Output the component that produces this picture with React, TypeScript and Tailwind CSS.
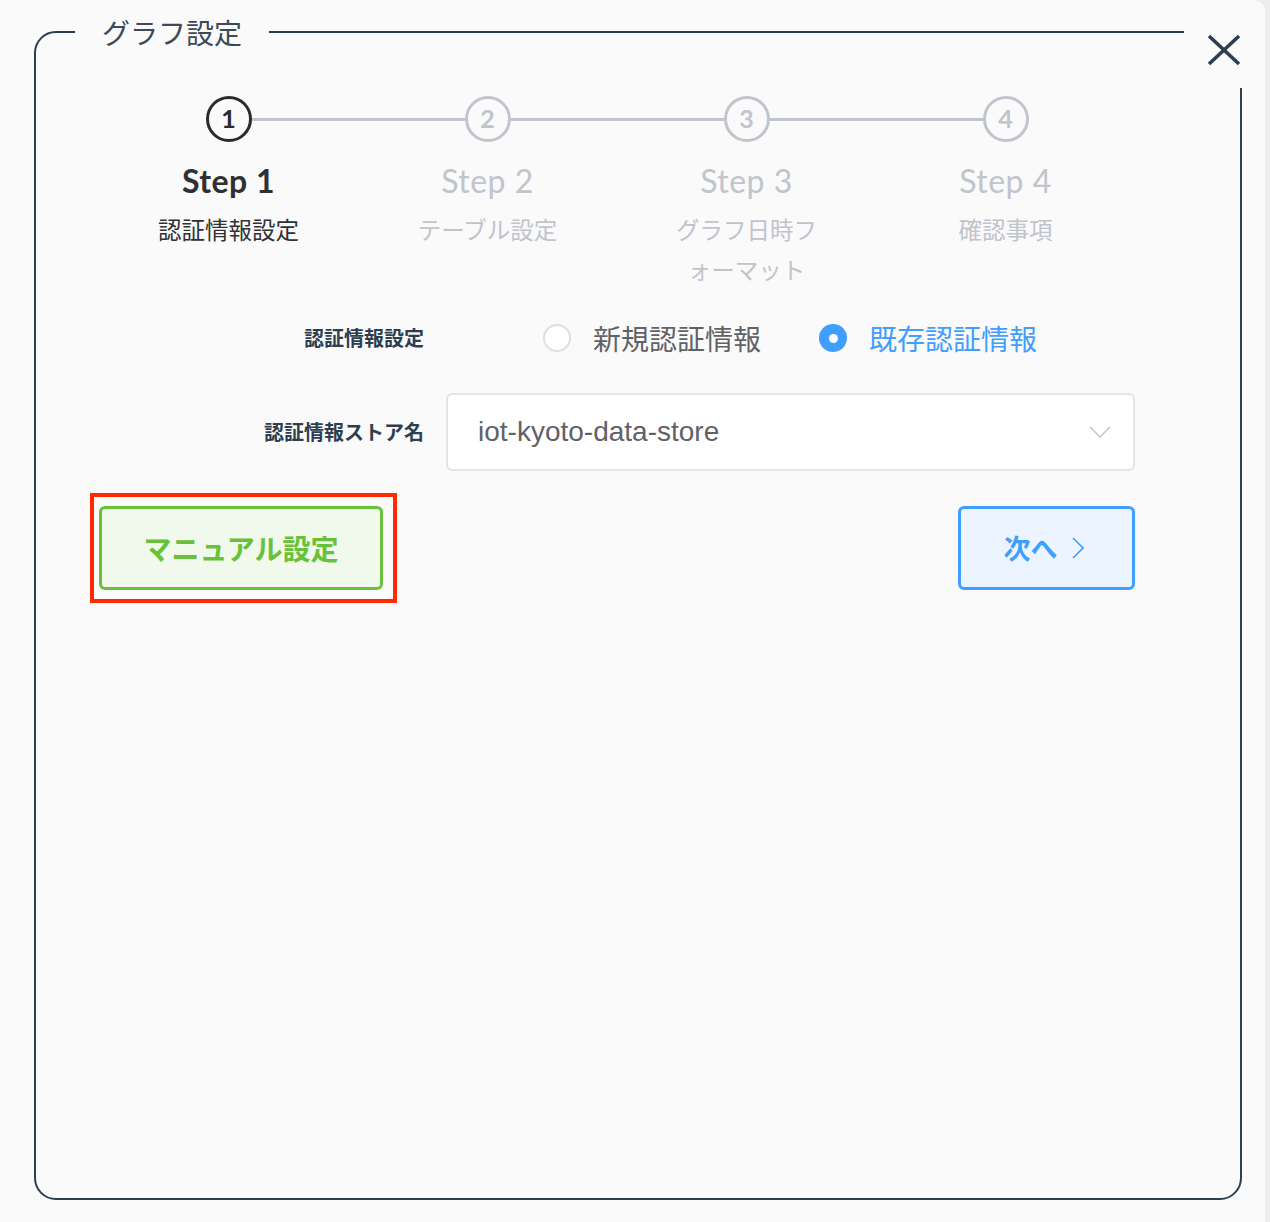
import { useState } from "react";

const steps = [
	{ no: 1, title: "Step 1", desc: "認証情報設定" },
	{ no: 2, title: "Step 2", desc: "テーブル設定" },
	{ no: 3, title: "Step 3", desc: "グラフ日時フォーマット" },
	{ no: 4, title: "Step 4", desc: "確認事項" },
];

const jp = "font-['Noto_Sans_CJK_JP','Noto_Sans',sans-serif]";

function Stepper() {
	const active = 1;
	return (
		<div className="grid grid-cols-4 w-[1036px]">
			{steps.map((s, i) => {
				const on = s.no === active;
				return (
					<div key={s.no} className="flex flex-col items-center">
						<div className="flex items-center w-full">
							<div className={i === 0 ? "flex-1 h-[3px]" : "flex-1 h-[3px] bg-[#c0c4cc]"} />
							<div
								className={
									on
										? "w-[46px] h-[46px] rounded-full border-[3px] border-[#2a2a2a] flex items-center justify-center text-[#2a2a2a] font-['Lato',sans-serif] font-bold text-[25px]"
										: "w-[46px] h-[46px] rounded-full border-[3px] border-[#c0c4cc] flex items-center justify-center text-[#c0c4cc] font-['Lato',sans-serif] font-bold text-[25px]"
								}
							>
								{s.no}
							</div>
							<div className={i === 3 ? "flex-1 h-[3px]" : "flex-1 h-[3px] bg-[#c0c4cc]"} />
						</div>
						<div
							className={
								on
									? "mt-[19px] leading-[40px] text-[32px] tracking-[0.5px] font-['Lato',sans-serif] font-bold text-[#2f3033]"
									: "mt-[19px] leading-[40px] text-[32px] tracking-[0.5px] font-['Lato',sans-serif] text-[#c0c4cc]"
							}
						>
							{s.title}
						</div>
						<div
							className={`mt-[8px] w-[150px] text-center leading-[40px] text-[23.5px] ${jp} ${
								on ? "text-[#303133]" : "text-[#c0c4cc]"
							}`}
						>
							{s.desc}
						</div>
					</div>
				);
			})}
		</div>
	);
}

function Radio({ checked, label, onClick }: { checked: boolean; label: string; onClick: () => void }) {
	return (
		<button onClick={onClick} className="flex items-center gap-[22px]">
			{checked ? (
				<span className="w-[28px] h-[28px] rounded-full bg-[#409eff] flex items-center justify-center">
					<span className="w-[9px] h-[9px] rounded-full bg-white" />
				</span>
			) : (
				<span className="w-[28px] h-[28px] rounded-full border-2 border-[#dcdfe6] bg-white" />
			)}
			<span className={`text-[28px] leading-[40px] ${jp} ${checked ? "text-[#409eff]" : "text-[#606266]"}`}>
				{label}
			</span>
		</button>
	);
}

export default function App() {
	const [mode, setMode] = useState("existing");
	return (
		<div className="min-h-screen bg-[#ededed]">
			<div className="relative w-[1265px] h-[1222px] bg-[#fafafa] rounded-tr-[12px] pt-[13px]">
				<fieldset className="ml-[34px] w-[1208px] h-[1187px] border-2 border-[#2c3e50] rounded-[22px]">
					<legend className={`ml-[39px] px-[27px] text-[28px] leading-[38px] text-[#3b4a5a] ${jp}`}>
						グラフ設定
					</legend>
					<div className="pt-[45px] pl-[63px]">
						<Stepper />

						<div className="mt-[21px] flex items-center h-[56px]">
							<div className={`w-[347px] pr-[22px] text-right text-[20px] font-bold text-[#2c3e50] ${jp}`}>
								認証情報設定
							</div>
							<div className="ml-[97px] flex items-center gap-[58px]">
								<Radio checked={mode === "new"} label="新規認証情報" onClick={() => setMode("new")} />
								<Radio checked={mode === "existing"} label="既存認証情報" onClick={() => setMode("existing")} />
							</div>
						</div>

						<div className="mt-[27px] flex items-center">
							<div className={`w-[347px] pr-[22px] text-right text-[20px] font-bold text-[#2c3e50] ${jp}`}>
								認証情報ストア名
							</div>
							<div className="w-[689px] h-[78px] bg-white border-2 border-[#e2e4e9] rounded-[6px] flex items-center justify-between pl-[30px] pr-[22px]">
								<span className="text-[28px] text-[#606266] font-['Liberation_Sans',Arial,sans-serif]">
									iot-kyoto-data-store
								</span>
								<svg width="22" height="12" viewBox="0 0 22 12" fill="none">
									<polyline points="1,1 11,11 21,1" stroke="#c0c4cc" strokeWidth="1.5" />
								</svg>
							</div>
						</div>

						<div className="mt-[22px] w-[1036px] flex items-start justify-between">
							<div className="-ml-[9px] border-4 border-[#ff2a00] pl-[5px] pr-[10px] py-[9px]">
								<button
									className={`w-[284px] h-[84px] border-[3px] border-[#67c23a] bg-[#f0f9eb] rounded-[6px] text-[#67c23a] text-[28px] font-bold ${jp}`}
								>
									マニュアル設定
								</button>
							</div>
							<button
								className={`mt-[13px] w-[177px] h-[84px] border-[3px] border-[#409eff] bg-[#ecf5ff] rounded-[6px] text-[#409eff] text-[27px] font-bold flex items-center justify-center gap-[14px] pr-[6px] ${jp}`}
							>
								次へ
								<svg width="12" height="22" viewBox="0 0 12 22" fill="none">
									<polyline points="1,1 11,11 1,21" stroke="#409eff" strokeWidth="1.6" />
								</svg>
							</button>
						</div>
					</div>
				</fieldset>

				<div className="absolute left-[1184px] top-[14px] w-[62px] h-[74px] bg-[#fafafa]">
					<svg width="62" height="74" viewBox="0 0 62 74" fill="none">
						<line x1="25" y1="22" x2="55" y2="50" stroke="#2c3e50" strokeWidth="3.6" />
						<line x1="55" y1="22" x2="25" y2="50" stroke="#2c3e50" strokeWidth="3.6" />
					</svg>
				</div>
			</div>
		</div>
	);
}
